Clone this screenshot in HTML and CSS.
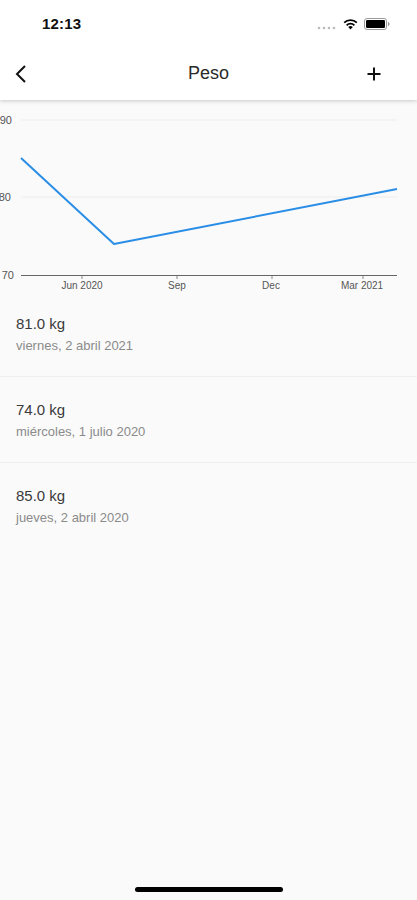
FILE: index.html
```html
<!DOCTYPE html>
<html lang="es">
<head>
  <meta charset="UTF-8">
  <meta name="viewport" content="width=device-width, initial-scale=1.0">
  <title>Peso</title>
  <link rel="stylesheet" href="styles.css">
</head>
<body>

  <div class="screen">
    <header class="top">
      <div class="status-bar">
        <span class="clock">12:13</span>
        <div class="status-icons">
          <svg class="signal" width="20" height="4" viewBox="0 0 20 4">
            <circle cx="2" cy="2" r="1.3" fill="#bbb"/>
            <circle cx="7" cy="2" r="1.3" fill="#bbb"/>
            <circle cx="12" cy="2" r="1.3" fill="#bbb"/>
            <circle cx="17" cy="2" r="1.3" fill="#bbb"/>
          </svg>
          <svg class="wifi" width="15" height="12" viewBox="0 0 15 12">
            <path d="M7.5 11.5 L5.2 9 A3.4 3.4 0 0 1 9.8 9 Z" fill="#000"/>
            <path d="M3.6 7.3 A5.6 5.6 0 0 1 11.4 7.3" stroke="#000" stroke-width="1.8" fill="none"/>
            <path d="M1.2 4.6 A9 9 0 0 1 13.8 4.6" stroke="#000" stroke-width="1.8" fill="none"/>
          </svg>
          <svg class="battery" width="26" height="12" viewBox="0 0 26 12">
            <rect x="0.5" y="0.5" width="22" height="11" rx="2.5" fill="none" stroke="#999" stroke-width="1"/>
            <rect x="2" y="2" width="19" height="8" rx="1.3" fill="#000"/>
            <path d="M24 4 v4 a1.5 2 0 0 0 0 -4 z" fill="#999"/>
          </svg>
        </div>
      </div>
      <nav class="nav-bar">
        <button class="nav-btn">
          <svg width="14" height="20" viewBox="0 0 14 20">
            <path d="M11 2 L3 10 L11 18" stroke="#111" stroke-width="2" fill="none"/>
          </svg>
        </button>
        <h1 class="nav-title">Peso</h1>
        <button class="nav-btn">
          <svg width="16" height="16" viewBox="0 0 16 16">
            <path d="M8 1.5 V14.5 M1.5 8 H14.5" stroke="#111" stroke-width="2" fill="none"/>
          </svg>
        </button>
      </nav>
    </header>

    <section class="chart">
      <svg width="417" height="191" viewBox="0 0 417 191">
        <g class="grid">
          <line x1="21" y1="20" x2="397" y2="20"/>
          <line x1="21" y1="97" x2="397" y2="97"/>
        </g>
        <line class="axis" x1="21" y1="175.5" x2="397" y2="175.5"/>
        <g class="ticks">
          <line x1="82" y1="176" x2="82" y2="179"/>
          <line x1="177" y1="176" x2="177" y2="179"/>
          <line x1="272" y1="176" x2="272" y2="179"/>
          <line x1="363" y1="176" x2="363" y2="179"/>
        </g>
        <g class="y-labels">
          <text x="12" y="24">90</text>
          <text x="11" y="101">80</text>
          <text x="14" y="179">70</text>
        </g>
        <g class="x-labels">
          <text x="82" y="189">Jun 2020</text>
          <text x="177" y="189">Sep</text>
          <text x="271" y="189">Dec</text>
          <text x="362" y="189">Mar 2021</text>
        </g>
        <polyline class="series" points="21,58 114,144 397,89"/>
      </svg>
    </section>

    <ul class="entries">
      <li class="entry">
        <div class="entry-weight">81.0 kg</div>
        <div class="entry-date">viernes, 2 abril 2021</div>
      </li>
      <li class="entry">
        <div class="entry-weight">74.0 kg</div>
        <div class="entry-date">miércoles, 1 julio 2020</div>
      </li>
      <li class="entry">
        <div class="entry-weight">85.0 kg</div>
        <div class="entry-date">jueves, 2 abril 2020</div>
      </li>
    </ul>

    <div class="home-indicator"></div>
  </div>

</body>
</html>
```

FILE: styles.css
```css
body {
  margin: 0;
  font-family: "Liberation Sans", Arial, sans-serif;
  background-color: #fafafa;
}

.screen {
  position: relative;
  width: 417px;
  height: 900px;
  overflow: hidden;
  display: flex;
  flex-direction: column;
  background-color: #fafafa;
}

.top {
  background-color: #fff;
  box-shadow: 0 1px 4px rgba(0, 0, 0, 0.2);
  z-index: 1;
}

.status-bar {
  height: 47px;
  display: flex;
  align-items: center;
  justify-content: space-between;
  padding: 0 27px 0 42px;
}

.clock {
  font-size: 15px;
  font-weight: bold;
  color: #111;
  letter-spacing: 0.2px;
}

.status-icons {
  display: flex;
  align-items: center;
  gap: 6px;
}

.signal {
  margin-top: 8px;
}

.nav-bar {
  height: 53px;
  display: flex;
  align-items: center;
  justify-content: space-between;
  padding: 0 28px 0 14px;
}

.nav-btn {
  width: 30px;
  height: 30px;
  padding: 0;
  border: none;
  background: none;
  display: flex;
  align-items: center;
  justify-content: center;
}

.nav-btn:first-child {
  justify-content: flex-start;
}

.nav-title {
  margin: 0 0 0 14px;
  font-size: 18px;
  font-weight: normal;
  color: #2a2a2a;
}

.chart {
  height: 191px;
}

.chart svg {
  display: block;
}

.grid line {
  stroke: #ececec;
  stroke-width: 1;
}

.axis {
  stroke: #666;
  stroke-width: 1.2;
}

.ticks line {
  stroke: #888;
  stroke-width: 1;
}

.y-labels text {
  font-size: 11px;
  fill: #555;
  text-anchor: end;
}

.x-labels text {
  font-size: 10px;
  fill: #555;
  text-anchor: middle;
}

.series {
  fill: none;
  stroke: #2a8ee6;
  stroke-width: 2;
  stroke-linejoin: round;
}

.entries {
  list-style: none;
  margin: 0;
  padding: 0;
}

.entry {
  padding: 23px 16px 21px;
  border-bottom: 1px solid #efefef;
}

.entry:last-child {
  border-bottom: none;
}

.entry-weight {
  font-size: 15px;
  line-height: 20px;
  color: #3a3a3a;
}

.entry-date {
  margin-top: 3px;
  font-size: 13px;
  line-height: 18px;
  color: #8a8a8a;
}

.home-indicator {
  position: absolute;
  left: 135px;
  bottom: 8px;
  width: 148px;
  height: 5px;
  border-radius: 3px;
  background-color: #000;
}
```
